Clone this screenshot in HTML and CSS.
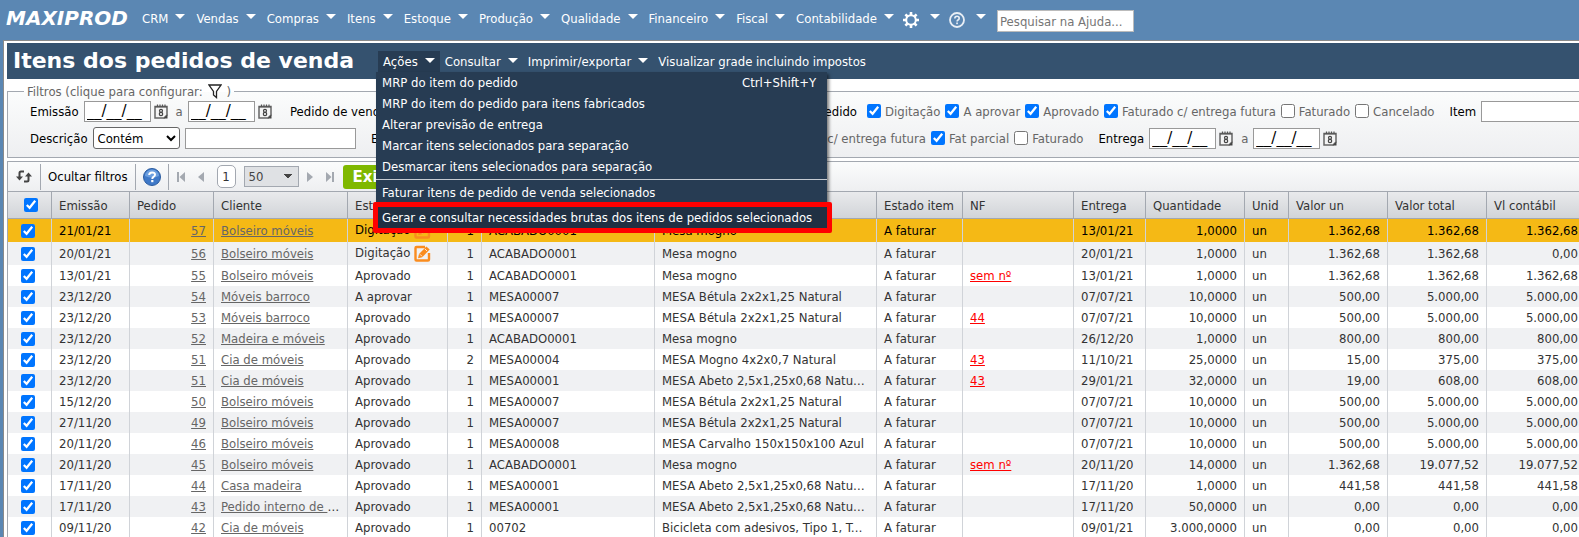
FILE: index.html
```html
<!DOCTYPE html>
<html lang="pt-BR">
<head>
    <meta charset="UTF-8">
    <meta name="viewport" content="width=device-width, initial-scale=1.0">
    <title>Itens dos pedidos de venda</title>
    <link rel="stylesheet" href="styles.css">
</head>
<body>

<svg class="sprite" aria-hidden="true">
    <symbol id="cal" viewBox="0 0 14 15">
        <path d="M1 2.500h12v8.500l-3 3H1z" fill="#f4f4f4" stroke="#666" stroke-width="1.500"/>
        <path d="M1 3h12M3.500 0.500v3M6 0.500v3M8.500 0.500v3M11 0.500v3" stroke="#555" stroke-width="1.200"/>
        <path d="M13.500 10.500v4h-4z" fill="#444"/>
        <circle cx="7" cy="6.800" r="1.500" fill="none" stroke="#444" stroke-width="1.200"/>
        <circle cx="7" cy="10" r="1.700" fill="none" stroke="#444" stroke-width="1.200"/>
    </symbol>
    <symbol id="edit" viewBox="0 0 17 17">
        <path d="M11 2H2.500Q1.500 2 1.500 3v11.500q0 1 1 1H14q1 0 1-1V8" fill="none" stroke="#fa8c1e" stroke-width="2.400"/>
        <path d="M4 13.200l1-4.200L12.400 1.400l3.300 3.200-7.500 7.700z" fill="#fa8c1e"/>
        <path d="M6 9.300l2 2M11 4l2 2" stroke="#fff" stroke-width="0.800"/>
    </symbol>
</svg>

<nav class="topbar">
    <a class="logo" href="#">MAXIPROD</a>
    <a class="menu-link" href="#">CRM</a>
    <a class="menu-link" href="#">Vendas</a>
    <a class="menu-link" href="#">Compras</a>
    <a class="menu-link" href="#">Itens</a>
    <a class="menu-link" href="#">Estoque</a>
    <a class="menu-link" href="#">Produção</a>
    <a class="menu-link" href="#">Qualidade</a>
    <a class="menu-link" href="#">Financeiro</a>
    <a class="menu-link" href="#">Fiscal</a>
    <a class="menu-link" href="#">Contabilidade</a>
    <a class="menu-link icon-link" href="#" aria-label="Configurações">
        <svg width="16" height="18" viewBox="0 0 16 18">
            <circle cx="8" cy="10" r="4.800" fill="none" stroke="#fff" stroke-width="2"/>
            <path d="M8 2v3M8 15v3M0 10h3M13 10h3M2.400 4.400l2.100 2.100M11.500 13.500l2.100 2.100M13.600 4.400l-2.100 2.100M4.500 13.500l-2.100 2.100" stroke="#fff" stroke-width="2.600"/>
        </svg>
    </a>
    <a class="menu-link icon-link" href="#" aria-label="Ajuda">
        <svg width="16" height="18" viewBox="0 0 16 18">
            <circle cx="8" cy="10" r="7" fill="none" stroke="#e8eef5" stroke-width="1.800"/>
            <path d="M5.800 8.500q0-2.300 2.200-2.300t2.200 2q0 1.100-1.200 1.800-.9.600-.9 1.500" fill="none" stroke="#e8eef5" stroke-width="1.600"/>
            <rect x="7.200" y="12.500" width="1.700" height="1.700" fill="#e8eef5"/>
        </svg>
    </a>
    <input class="help-search" type="text" placeholder="Pesquisar na Ajuda..." aria-label="Pesquisar na Ajuda">
</nav>

<main class="page">
    <header class="page-header">
        <h1>Itens dos pedidos de venda</h1>
        <ul class="actions">
            <li class="open">
                <a class="caret" href="#">Ações</a>
                <ul class="dropdown">
                    <li><a href="#">MRP do item do pedido <span>Ctrl+Shift+Y</span></a></li>
                    <li><a href="#">MRP do item do pedido para itens fabricados</a></li>
                    <li><a href="#">Alterar previsão de entrega</a></li>
                    <li><a href="#">Marcar itens selecionados para separação</a></li>
                    <li><a href="#">Desmarcar itens selecionados para separação</a></li>
                    <li class="divider"></li>
                    <li><a href="#">Faturar itens de pedido de venda selecionados</a></li>
                    <li class="highlight"><a href="#">Gerar e consultar necessidades brutas dos itens de pedidos selecionados</a></li>
                </ul>
            </li>
            <li><a class="caret" href="#">Consultar</a></li>
            <li><a class="caret" href="#">Imprimir/exportar</a></li>
            <li><a href="#">Visualizar grade incluindo impostos</a></li>
        </ul>
    </header>

    <fieldset class="filters">
        <legend>Filtros (clique para configurar:
            <svg width="14" height="15" viewBox="0 0 14 15"><path d="M1 1h12L8.500 7.500V13.500L5.500 11V7.500z" fill="#fff" stroke="#222" stroke-width="1.300"/></svg>
            )</legend>
        <div class="filter-row">
            <div class="field first">
                <label for="emissaoDe">Emissão</label>
                <input class="date" id="emissaoDe" type="text" value="__/__/__">
                <svg class="cal"><use href="#cal"/></svg>
                <label class="to" for="emissaoAte">a</label>
                <input class="date" id="emissaoAte" type="text" value="__/__/__">
                <svg class="cal"><use href="#cal"/></svg>
            </div>
            <div class="field second">
                <label for="pedido">Pedido de venda</label>
                <input id="pedido" type="text">
                <span class="name">Estado pedido</span>
            </div>
            <div class="checks">
                <label><input type="checkbox" checked>Digitação</label>
                <label><input type="checkbox" checked>A aprovar</label>
                <label><input type="checkbox" checked>Aprovado</label>
                <label><input type="checkbox" checked>Faturado c/ entrega futura</label>
                <label><input type="checkbox">Faturado</label>
                <label><input type="checkbox">Cancelado</label>
            </div>
            <div class="field last">
                <label for="item">Item</label>
                <input id="item" type="text">
            </div>
        </div>
        <div class="filter-row">
            <div class="field first wide">
                <label for="descricao">Descrição</label>
                <select aria-label="Operador">
                    <option>Contém</option>
                </select>
                <input id="descricao" type="text">
            </div>
            <div class="field second wide">
                <span class="name">Estado item</span>
                <span class="checks"><label><input type="checkbox" checked>Faturado c/ entrega futura</label></span>
            </div>
            <div class="checks">
                <label><input type="checkbox" checked>Fat parcial</label>
                <label><input type="checkbox">Faturado</label>
            </div>
            <div class="field last">
                <label for="entregaDe">Entrega</label>
                <input class="date" id="entregaDe" type="text" value="__/__/__">
                <svg class="cal"><use href="#cal"/></svg>
                <label class="to" for="entregaAte">a</label>
                <input class="date" id="entregaAte" type="text" value="__/__/__">
                <svg class="cal"><use href="#cal"/></svg>
            </div>
        </div>
    </fieldset>

    <section class="grid">
        <div class="toolbar">
            <button class="tool" aria-label="Atualizar">
                <svg width="16" height="13" viewBox="0 0 16 13">
                    <path d="M8 1.500H5Q3.500 1.500 3.500 3v5M8 11.500h3q1.500 0 1.500-1.500V5" fill="none" stroke="#444" stroke-width="2"/>
                    <path d="M0 6.500h7L3.500 10.500zM9 6.500h7L12.500 2.500z" fill="#444"/>
                </svg>
            </button>
            <button class="tool">Ocultar filtros</button>
            <button class="tool" aria-label="Ajuda">
                <svg width="18" height="18" viewBox="0 0 18 18">
                    <circle cx="9" cy="9" r="8.500" fill="#3f79c8" stroke="#2b5c9f"/>
                    <path d="M2 8a7 6.500 0 0 1 14 0q-7 3-14 0z" fill="#6c9fdf"/>
                    <path d="M6.200 7q0-2.600 2.900-2.600t2.900 2.400q0 1.200-1.500 2.100-1.200.8-1.200 2" fill="none" stroke="#fff" stroke-width="2"/>
                    <rect x="8.200" y="12" width="2.200" height="2.200" fill="#fff"/>
                </svg>
            </button>
            <div class="pager">
                <button aria-label="Primeira"><svg width="8" height="10" viewBox="0 0 8 10"><path d="M0 0h2v10H0zM8 0v10L2.500 5z" fill="#a4a9b0"/></svg></button>
                <button aria-label="Anterior"><svg width="6" height="10" viewBox="0 0 6 10"><path d="M6 0v10L0 5z" fill="#a4a9b0"/></svg></button>
                <button class="current">1</button>
                <select aria-label="Itens por página">
                    <option>50</option>
                </select>
                <button aria-label="Próxima"><svg width="6" height="10" viewBox="0 0 6 10"><path d="M0 0v10l6-5z" fill="#a4a9b0"/></svg></button>
                <button aria-label="Última"><svg width="8" height="10" viewBox="0 0 8 10"><path d="M6 0h2v10H6zM0 0v10l5.500-5z" fill="#a4a9b0"/></svg></button>
            </div>
            <button class="show">Exibir</button>
        </div>

        <table>
            <colgroup>
                <col class="c-check"><col class="c-date"><col class="c-order"><col class="c-client"><col class="c-state">
                <col class="c-num"><col class="c-code"><col class="c-desc"><col class="c-item-state"><col class="c-nf">
                <col class="c-delivery"><col class="c-qty"><col class="c-unit"><col class="c-value"><col class="c-value"><col>
            </colgroup>
            <thead>
                <tr>
                    <th><input type="checkbox" checked aria-label="Selecionar todos"></th>
                    <th>Emissão</th>
                    <th>Pedido</th>
                    <th>Cliente</th>
                    <th>Estado</th>
                    <th></th>
                    <th>Código</th>
                    <th>Descrição</th>
                    <th>Estado item</th>
                    <th>NF</th>
                    <th>Entrega</th>
                    <th>Quantidade</th>
                    <th>Unid</th>
                    <th>Valor un</th>
                    <th>Valor total</th>
                    <th>Vl contábil</th>
                </tr>
            </thead>
            <tbody id="itens"></tbody>
        </table>
    </section>
</main>

<script>
    // emissão, pedido, cliente, estado, nº, código, descrição, NF, entrega, quantidade, valor un, valor total, vl contábil
    const itens = [
        ["21/01/21", 57, "Bolseiro móveis", "Digitação", 1, "ACABADO0001", "Mesa mogno", "", "13/01/21", "1,0000", "1.362,68", "1.362,68", "1.362,68"],
        ["20/01/21", 56, "Bolseiro móveis", "Digitação", 1, "ACABADO0001", "Mesa mogno", "", "20/01/21", "1,0000", "1.362,68", "1.362,68", "0,00"],
        ["13/01/21", 55, "Bolseiro móveis", "Aprovado", 1, "ACABADO0001", "Mesa mogno", "sem nº", "13/01/21", "1,0000", "1.362,68", "1.362,68", "1.362,68"],
        ["23/12/20", 54, "Móveis barroco", "A aprovar", 1, "MESA00007", "MESA Bétula 2x2x1,25 Natural", "", "07/07/21", "10,0000", "500,00", "5.000,00", "5.000,00"],
        ["23/12/20", 53, "Móveis barroco", "Aprovado", 1, "MESA00007", "MESA Bétula 2x2x1,25 Natural", "44", "07/07/21", "10,0000", "500,00", "5.000,00", "5.000,00"],
        ["23/12/20", 52, "Madeira e móveis", "Aprovado", 1, "ACABADO0001", "Mesa mogno", "", "26/12/20", "1,0000", "800,00", "800,00", "800,00"],
        ["23/12/20", 51, "Cia de móveis", "Aprovado", 2, "MESA00004", "MESA Mogno 4x2x0,7 Natural", "43", "11/10/21", "25,0000", "15,00", "375,00", "375,00"],
        ["23/12/20", 51, "Cia de móveis", "Aprovado", 1, "MESA00001", "MESA Abeto 2,5x1,25x0,68 Natural", "43", "29/01/21", "32,0000", "19,00", "608,00", "608,00"],
        ["15/12/20", 50, "Bolseiro móveis", "Aprovado", 1, "MESA00007", "MESA Bétula 2x2x1,25 Natural", "", "07/07/21", "10,0000", "500,00", "5.000,00", "5.000,00"],
        ["27/11/20", 49, "Bolseiro móveis", "Aprovado", 1, "MESA00007", "MESA Bétula 2x2x1,25 Natural", "", "07/07/21", "10,0000", "500,00", "5.000,00", "5.000,00"],
        ["20/11/20", 46, "Bolseiro móveis", "Aprovado", 1, "MESA00008", "MESA Carvalho 150x150x100 Azul", "", "07/07/21", "10,0000", "500,00", "5.000,00", "5.000,00"],
        ["20/11/20", 45, "Bolseiro móveis", "Aprovado", 1, "ACABADO0001", "Mesa mogno", "sem nº", "20/11/20", "14,0000", "1.362,68", "19.077,52", "19.077,52"],
        ["17/11/20", 44, "Casa madeira", "Aprovado", 1, "MESA00001", "MESA Abeto 2,5x1,25x0,68 Natural", "", "17/11/20", "1,0000", "441,58", "441,58", "441,58"],
        ["17/11/20", 43, "Pedido interno de manutenção", "Aprovado", 1, "MESA00001", "MESA Abeto 2,5x1,25x0,68 Natural", "", "17/11/20", "50,0000", "0,00", "0,00", "0,00"],
        ["09/11/20", 42, "Cia de móveis", "Aprovado", 1, "00702", "Bicicleta com adesivos, Tipo 1, Tamanho M", "", "09/01/21", "3.000,0000", "0,00", "0,00", "0,00"]
    ];

    const tabela = document.getElementById("itens");
    itens.forEach((i, n) => {
        const digitacao = i[3] === "Digitação";
        tabela.innerHTML += `<tr class="${n === 0 ? "selected" : ""} ${digitacao ? "tall" : ""}">
            <td class="check"><input type="checkbox" checked aria-label="Selecionar item"></td>
            <td>${i[0]}</td>
            <td class="num"><a href="#">${i[1]}</a></td>
            <td><a href="#">${i[2]}</a></td>
            <td>${i[3]}${digitacao ? ' <svg class="edit"><use href="#edit"/></svg>' : ""}</td>
            <td class="num">${i[4]}</td>
            <td>${i[5]}</td>
            <td class="desc">${i[6]}</td>
            <td>A faturar</td>
            <td>${i[7] ? `<a class="nf" href="#">${i[7]}</a>` : ""}</td>
            <td>${i[8]}</td>
            <td class="num">${i[9]}</td>
            <td>un</td>
            <td class="num">${i[10]}</td>
            <td class="num">${i[11]}</td>
            <td class="num">${i[12]}</td>
        </tr>`;
    });
</script>

</body>
</html>
```
FILE: styles.css
```css
* {
    box-sizing: border-box;
}
body {
    margin: 0;
    height: 100vh;
    overflow: hidden;
    background: #5b87b3;
    font-family: "DejaVu Sans Condensed", "DejaVu Sans", Tahoma, sans-serif;
    font-size: 13px;
    color: #333;
}
input, select, button {
    font: inherit;
    margin: 0;
}
ul {
    list-style: none;
    margin: 0;
    padding: 0;
}
input[type="checkbox"] {
    width: 14px;
    height: 14px;
    accent-color: #0075ff;
}
.sprite {
    display: none;
}

/* barra superior */
.topbar {
    display: flex;
    height: 40px;
    padding: 0 6px;
    color: #fff;
}
.topbar a {
    color: #fff;
    text-decoration: none;
    white-space: nowrap;
}
.logo {
    width: 136px;
    font: italic bold 20px/36px "DejaVu Sans", Verdana, sans-serif;
}
.menu-link {
    display: flex;
    align-items: center;
    height: 37px;
    margin-right: 11px;
}
.menu-link::after, .caret::after {
    content: "";
    margin: 0 0 3px 7px;
    border: 5px solid transparent;
    border-top-color: #fff;
    border-bottom: 0;
}
.menu-link::after {
    margin-bottom: 5px;
}
.icon-link {
    margin-left: -2px;
}
.icon-link::after {
    margin-left: 11px;
}
.help-search {
    width: 137px;
    height: 22px;
    margin-top: 10px;
    padding: 0 2px;
    border: 1px solid #bbb;
}

/* página */
.page {
    margin-left: 3px;
    padding: 2px 0 0 3px;
    border: solid #8a8a8a;
    border-width: 1px 0 0 1px;
    background: #fff;
}
.page-header {
    display: flex;
    height: 36px;
    padding-left: 6px;
    background: #35526f;
}
h1 {
    margin: 0 24px 0 0;
    font: bold 22px/36px "DejaVu Sans", Verdana, sans-serif;
    color: #fff;
    white-space: nowrap;
}
.actions {
    display: flex;
    height: 21px;
    margin-top: 8px;
}
.actions a {
    display: flex;
    align-items: center;
    height: 21px;
    padding: 0 5px;
    color: #fff;
    text-decoration: none;
    white-space: nowrap;
}
.open {
    position: relative;
    background: #273c53;
}
.dropdown {
    position: absolute;
    z-index: 5;
    top: 21px;
    left: -2px;
    width: 451px;
    background: #273c53;
    box-shadow: 2px 2px 3px rgba(0, 0, 0, 0.5);
}
.dropdown a {
    justify-content: space-between;
    padding: 0 11px 0 6px;
}
.divider {
    height: 1px;
    margin: 2px 0;
    background: #c5cbd2;
}
.highlight {
    position: relative;
    margin-top: 4px;
    background: #203043;
}
.highlight::after {
    content: "";
    position: absolute;
    inset: -5px -5px -5px -3px;
    border: 5px solid #f00;
    border-radius: 2px;
    pointer-events: none;
}

/* filtros */
.filters {
    min-width: 0;
    margin: 3px 0 0;
    padding: 0 0 8px 22px;
    border: 1px solid #a3a8b0;
    border-right: 0;
    background: linear-gradient(#fbfcfc, #eeeff1);
}
legend {
    display: flex;
    align-items: center;
    gap: 5px;
    height: 18px;
    margin-left: -6px;
    padding: 0 3px;
    color: #666;
}
.filter-row {
    display: flex;
    align-items: center;
    height: 22px;
    margin-bottom: 5px;
    white-space: nowrap;
}
.filter-row:last-child {
    margin-bottom: 0;
}
.field {
    display: flex;
    align-items: center;
    gap: 5px;
    color: #000;
}
.field > input {
    height: 21px;
    border: 1px solid #999;
    background: #fff;
}
.field .date {
    width: 67px;
    padding: 0 2px;
    font: 15px "DejaVu Sans", Verdana, sans-serif;
}
.cal {
    flex: none;
    width: 14px;
    height: 15px;
    margin-left: -2px;
}
.to {
    padding-left: 3px;
    color: #666;
}
.first {
    flex: 0 0 260px;
}
.first.wide {
    flex-basis: 341px;
}
.first select {
    width: 87px;
    height: 22px;
    border: 1px solid #666;
    border-radius: 3px;
    background: #fff;
}
#descricao {
    width: 171px;
}
.second {
    flex: 0 0 567px;
    margin-right: 10px;
}
.second.wide {
    flex-basis: 555px;
    margin-right: 5px;
}
.second > :last-child {
    margin-left: auto;
}
.checks {
    display: flex;
    gap: 5px;
    color: #666;
}
.checks label {
    display: flex;
    align-items: center;
    gap: 4px;
}
.last {
    flex: 1;
    margin-left: 15px;
}
#item {
    flex: 1;
    border-right: 0;
}

/* grade */
.grid {
    margin-top: 3px;
    border: solid #a3a8b0;
    border-width: 1px 0 0 1px;
}
.toolbar {
    display: flex;
    align-items: center;
    height: 29px;
    background: linear-gradient(#fbfcfc, #eeeff1);
}
.toolbar button {
    display: flex;
    align-items: center;
    padding: 0;
    border: 0;
    background: none;
}
.toolbar .tool {
    height: 26px;
    padding: 0 7px;
    border-right: 1px solid #a3a8b0;
}
.toolbar .tool:first-child {
    padding: 0 8px;
}
.pager {
    display: flex;
    align-items: center;
    gap: 13px;
    padding: 0 9px 0 8px;
}
.pager .current {
    justify-content: center;
    width: 19px;
    height: 23px;
    border: 1px solid #a3a8b0;
    border-radius: 5px;
    background: #fff;
    color: #333;
}
.pager select {
    appearance: none;
    width: 55px;
    height: 21px;
    margin: 0 -5px;
    padding: 0 4px;
    border: 1px solid #a3a8b0;
    border-radius: 0;
    background: linear-gradient(to bottom right, #444 50%, transparent 0) right 5px center / 5px 5px no-repeat,
        linear-gradient(to bottom left, #444 50%, transparent 0) right 10px center / 5px 5px no-repeat, #dfe1e4;
    color: #444;
}
.toolbar .show {
    height: 24px;
    padding: 0 10px;
    border-radius: 3px;
    background: #7fb800;
    color: #fff;
    font: bold 15px "DejaVu Sans", Verdana, sans-serif;
}
table {
    width: 100%;
    table-layout: fixed;
    border-collapse: separate;
    border-spacing: 0;
}
.c-check { width: 44px; }
.c-date { width: 78px; }
.c-order { width: 84px; }
.c-client { width: 134px; }
.c-state { width: 100px; }
.c-num { width: 34px; }
.c-code { width: 173px; }
.c-desc { width: 222px; }
.c-item-state { width: 86px; }
.c-nf { width: 111px; }
.c-delivery { width: 72px; }
.c-qty { width: 99px; }
.c-unit { width: 44px; }
.c-value { width: 99px; }
th, td {
    overflow: hidden;
    padding: 0 7px;
    border-right: 1px solid #d0d3d8;
    text-align: left;
    text-overflow: ellipsis;
    white-space: nowrap;
}
th {
    height: 28px;
    border: solid #a3a8b0;
    border-width: 1px 1px 1px 0;
    background: linear-gradient(#e9eaec, #d1d4d8);
    font-weight: normal;
}
th:first-child {
    padding-left: 16px;
}
td {
    height: 21px;
}
.tall td {
    height: 23px;
}
td.check {
    padding-left: 13px;
}
td.desc {
    padding-right: 10px;
}
th input, td input {
    display: block;
}
tbody tr:nth-child(even) {
    background: #f0f1f3;
}
tbody .selected {
    background: #f5b915;
    color: #000;
}
td a {
    color: #666;
}
td .nf {
    color: #f00;
}
.num {
    text-align: right;
}
th:last-child, td:last-child {
    padding-right: 1px;
    border-right: 0;
}
.edit {
    width: 17px;
    height: 17px;
    vertical-align: middle;
}
```
